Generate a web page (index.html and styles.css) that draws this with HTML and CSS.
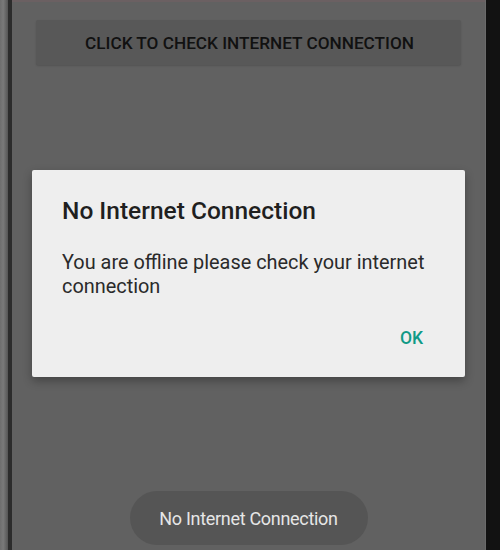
FILE: index.html
```html
<!DOCTYPE html>
<html>
<head>
<meta charset="utf-8">
<link rel="stylesheet" href="styles.css">
</head>
<body>
<div class="device">
  <div class="bezel-left"></div>
  <div class="bezel-dark"></div>
  <div class="screen">
    <div class="status"></div>
    <div class="btn-row">
      <div class="check-btn">CLICK TO CHECK INTERNET CONNECTION</div>
    </div>
    <div class="dialog-area">
      <div class="dialog">
        <div class="dialog-title">No Internet Connection</div>
        <div class="dialog-body">You are offline please check your internet connection</div>
        <div class="dialog-actions"><span class="ok">OK</span></div>
      </div>
    </div>
    <div class="toast-row">
      <div class="toast">No Internet Connection</div>
    </div>
  </div>
  <div class="bezel-right"></div>
</div>
</body>
</html>
```
FILE: styles.css
```css
* { box-sizing: border-box; }
html, body { margin: 0; padding: 0; }
body {
  width: 500px;
  height: 550px;
  overflow: hidden;
  background: #121212;
  font-family: Roboto, "Noto Sans", sans-serif;
}
.device {
  display: flex;
  width: 500px;
  height: 550px;
}
.bezel-left {
  width: 8px;
  background: linear-gradient(to right, #6e6e6e, #7a7a7a 40%, #555 100%);
}
.bezel-dark {
  width: 4px;
  background: #2c2c2c;
}
.screen {
  width: 474px;
  background: #616161;
  display: flex;
  flex-direction: column;
  border-right: 1px solid #6a6a6a;
}
.bezel-right {
  flex: 1;
  background: #121212;
}
.status {
  height: 2px;
  background: #6b6062;
}
.btn-row {
  padding: 18px 24px 0 24px;
}
.check-btn {
  height: 45px;
  background: #585858;
  border-radius: 2px;
  box-shadow: 0 1px 2px rgba(0,0,0,0.15);
  color: #111;
  font-weight: 500;
  font-size: 17.2px;
  display: flex;
  align-items: center;
  justify-content: center;
  padding-left: 2px;
}
.dialog-area {
  padding: 105px 20px 0 20px;
}
.dialog {
  background: #eeeeee;
  height: 207px;
  border-radius: 2px;
  box-shadow: 0 4px 10px rgba(0,0,0,0.3);
  padding: 26px 30px 0 30px;
  display: flex;
  flex-direction: column;
}
.dialog-title {
  font-size: 24.5px;
  font-weight: 500;
  color: #1f1f1f;
  line-height: 30px;
}
.dialog-body {
  margin-top: 25px;
  font-size: 19.9px;
  color: #2a2a2a;
  line-height: 24px;
}
.dialog-actions {
  display: flex;
  justify-content: flex-end;
  margin-top: 29px;
  padding-right: 12px;
}
.ok {
  color: #0f9a86;
  font-weight: 500;
  font-size: 17.5px;
}
.toast-row {
  margin-top: auto;
  display: flex;
  justify-content: center;
  padding-bottom: 5px;
}
.toast {
  width: 238px;
  height: 54px;
  border-radius: 27px;
  background: #555555;
  color: #e6e6e6;
  font-size: 18px;
  display: flex;
  align-items: center;
  justify-content: center;
  letter-spacing: -0.3px;
}
```
